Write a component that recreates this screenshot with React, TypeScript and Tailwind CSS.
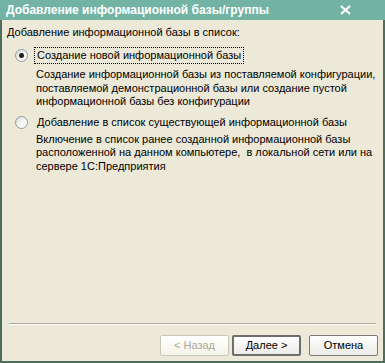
import React, { useState } from 'react'

function Radio({ checked }: { checked: boolean }) {
  return (
    <span className="relative flex h-[13px] w-[13px] shrink-0 items-center justify-center rounded-full border border-[#8d9aa6] bg-gradient-to-br from-[#dcdad3] via-[#f4f3ef] to-white">
      {checked && <span className="h-[5px] w-[5px] rounded-full bg-[#21211f]" />}
    </span>
  )
}

function Button({ children, disabled, primary }: { children: React.ReactNode; disabled?: boolean; primary?: boolean }) {
  return (
    <button
      disabled={disabled}
      className={
        'flex h-[21px] w-[69px] items-center justify-center rounded-[2px] bg-gradient-to-b from-white to-[#ecebe6] text-[11px] leading-none ' +
        (disabled
          ? 'border border-[#c9c7ba] text-[#aca899] from-[#f5f4ea] to-[#f5f4ea]'
          : primary
            ? 'border-2 border-[#6d6d6d] text-black'
            : 'border border-[#7a7a7a] text-black')
      }
    >
      {children}
    </button>
  )
}

export default function App() {
  const [mode, setMode] = useState<'new' | 'existing'>('new')

  return (
    <div
      className="flex h-[363px] w-[385px] flex-col overflow-hidden bg-[#4f6d5c] text-[11px] text-black"
      style={{ fontFamily: '"Liberation Sans", Arial, sans-serif' }}
    >
      {/* Title bar */}
      <div className="flex h-[20px] shrink-0 items-center justify-between bg-[#72b3a4] pl-[6px] pr-[34px]">
        <span className="text-[12px] font-bold text-white">Добавление информационной базы/группы</span>
        <svg width="11" height="10" viewBox="0 0 11 10">
          <path d="M1 1 L10 9 M10 1 L1 9" stroke="white" strokeWidth="2.2" />
        </svg>
      </div>

      {/* Body */}
      <div className="mx-[2px] mb-[2px] flex flex-1 flex-col bg-[#ece9d8] px-[5px] pt-[6px]">
        <div className="leading-[13px]">Добавление информационной базы в список:</div>

        <div className="mt-[8px] flex items-center gap-[6px] pl-[8px]" onClick={() => setMode('new')}>
          <Radio checked={mode === 'new'} />
          <span className="border border-dotted border-black px-[2px] py-[1px] leading-[13px]">
            Создание новой информационной базы
          </span>
        </div>
        <div className="mt-[4px] pl-[29px] leading-[13.5px]">
          Создание информационной базы из поставляемой конфигурации,
          <br />
          поставляемой демонстрационной базы или создание пустой
          <br />
          информационной базы без конфигурации
        </div>

        <div className="mt-[7px] flex items-center gap-[9px] pl-[8px]" onClick={() => setMode('existing')}>
          <Radio checked={mode === 'existing'} />
          <span className="leading-[13px]">Добавление в список существующей информационной базы</span>
        </div>
        <div className="mt-[4px] pl-[29px] leading-[13.5px]">
          Включение в список ранее созданной информационной базы
          <br />
          расположенной на данном компьютере,&nbsp; в локальной сети или на
          <br />
          сервере 1С:Предприятия
        </div>

        <div className="flex-1" />

        <div className="mx-[2px] h-px bg-[#aca899] shadow-[0_1px_0_white]" />

        <div className="flex justify-end gap-[3px] pb-[5px] pt-[11px]">
          <Button disabled>&lt; Назад</Button>
          <Button primary>Далее &gt;</Button>
          <div className="w-[2px]" />
          <Button>Отмена</Button>
        </div>
      </div>
    </div>
  )
}
